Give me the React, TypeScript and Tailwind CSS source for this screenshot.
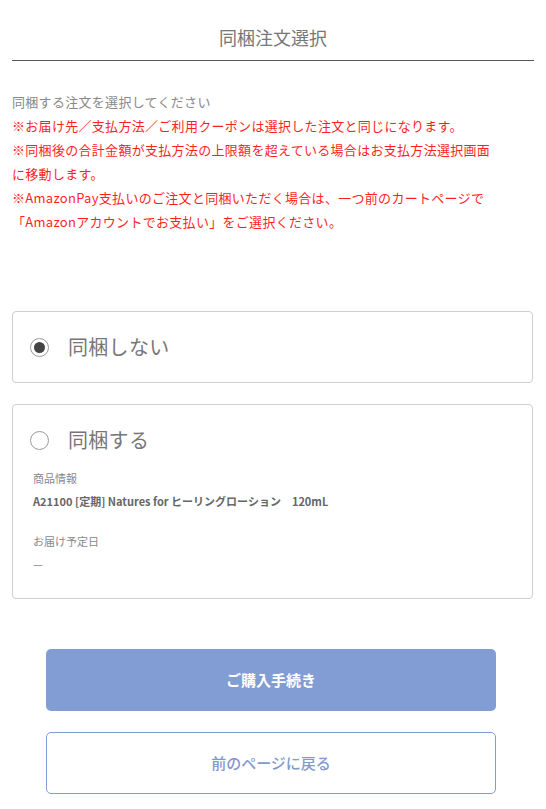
const font = { fontFamily: '"Noto Sans CJK JP", "Noto Sans", sans-serif' };

const Radio = ({ checked }: { checked?: boolean }) => (
  <span className="flex h-[19px] w-[19px] shrink-0 items-center justify-center rounded-full border border-[#9a9a9a] bg-white">
    {checked && <span className="h-[11px] w-[11px] rounded-full bg-[#444]" />}
  </span>
);

const App = () => {
  return (
    <div style={font} className="w-[546px] bg-white px-3 pb-4">
      <h1 className="border-b border-[#555] pt-[24px] pb-[10px] text-center text-[18px] leading-[26px] text-[#777]">
        同梱注文選択
      </h1>

      <div className="mt-[29px] max-w-[484px] text-[13px] leading-[24px] tracking-[0.3px]">
        <p className="text-[#888]">同梱する注文を選択してください</p>
        <p className="text-[#ff1f1f]">※お届け先／支払方法／ご利用クーポンは選択した注文と同じになります。</p>
        <p className="text-[#ff1f1f]">
          ※同梱後の合計金額が支払方法の上限額を超えている場合はお支払方法選択画面に移動します。
        </p>
        <p className="text-[#ff1f1f]">
          ※AmazonPay支払いのご注文と同梱いただく場合は、一つ前のカートページで「Amazonアカウントでお支払い」をご選択ください。
        </p>
      </div>

      <div className="mt-[77px] flex h-[72px] w-[521px] items-center gap-[19px] rounded border border-[#cfcfcf] px-[17px]">
        <Radio checked />
        <span className="text-[20px] leading-none tracking-[0.3px] text-[#777]">同梱しない</span>
      </div>

      <div className="mt-[21px] w-[521px] rounded border border-[#cfcfcf] px-[20px] pt-[24px] pb-[22px]">
        <div className="-ml-[3px] flex items-center gap-[19px]">
          <Radio />
          <span className="text-[20px] leading-[22px] tracking-[0.3px] text-[#777]">同梱する</span>
        </div>
        <div className="mt-[16px] text-[11px] leading-[23px]">
          <p className="text-[#888]">商品情報</p>
          <p className="font-semibold text-[#666]">A21100 [定期] Natures for ヒーリングローション　120mL</p>
          <p className="mt-[17px] text-[#888]">お届け予定日</p>
          <p className="text-[#888]">—</p>
        </div>
      </div>

      <div className="mt-[50px] ml-[34px] flex flex-col gap-[21px]">
        <button className="h-[62px] w-[450px] rounded-[5px] bg-[#829dd3] text-[15px] font-bold text-white">
          ご購入手続き
        </button>
        <button className="h-[62px] w-[450px] rounded-[5px] border border-[#829dd3] bg-white text-[15px] font-medium text-[#7f99cf]">
          前のページに戻る
        </button>
      </div>
    </div>
  );
};

export default App;
